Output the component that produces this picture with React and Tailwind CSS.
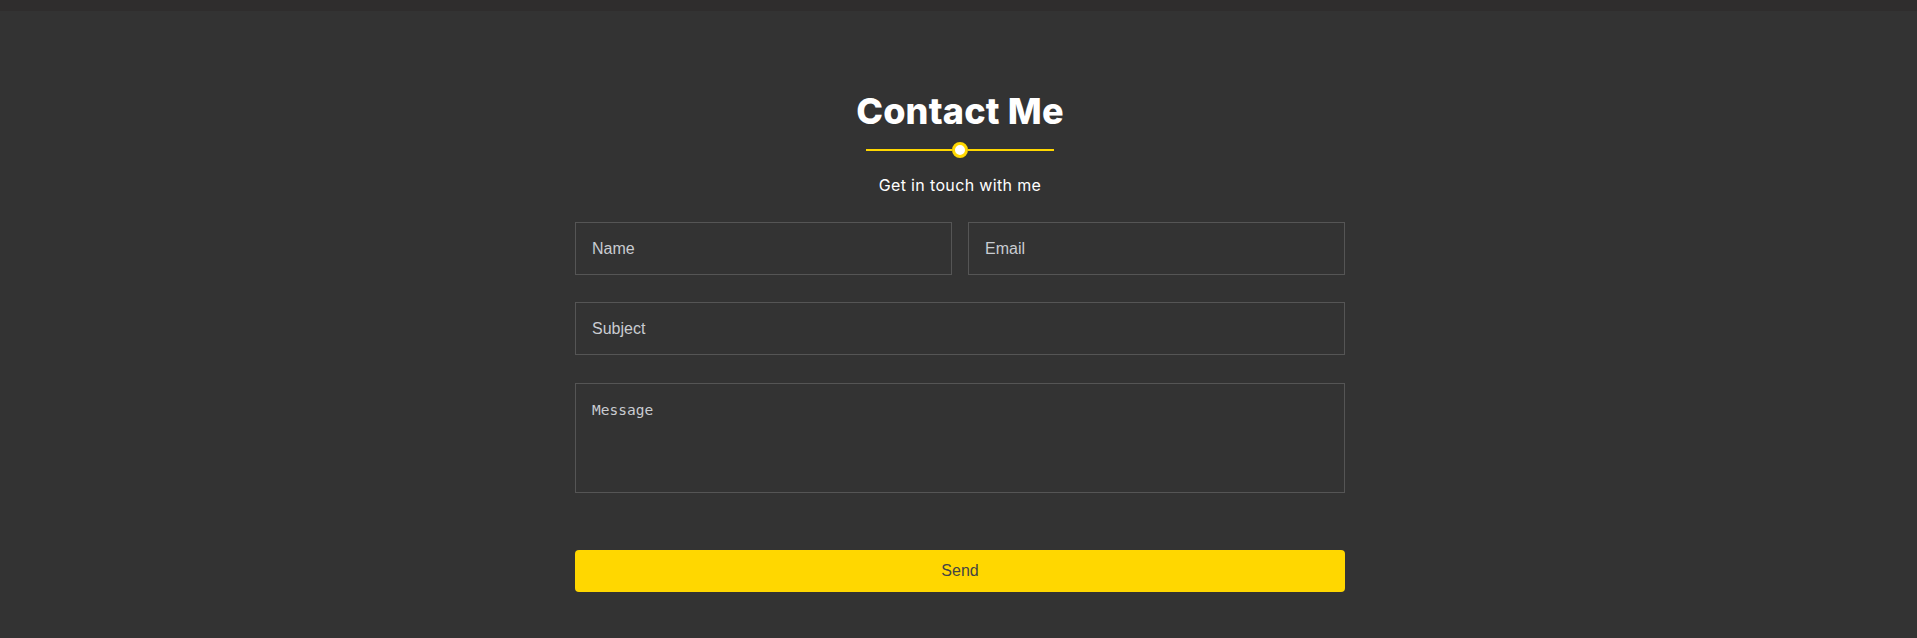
import { useState } from 'react';

const ContactSection = () => {
  const [form, setForm] = useState({ name: '', email: '', subject: '', message: '' });

  const handleChange = (e) => {
    setForm(prev => ({ ...prev, [e.target.name]: e.target.value }));
  };

  const inputClass =
    "h-[53px] w-full border border-[#555555] bg-transparent px-4 text-[16px] text-white placeholder:text-[#c9ccd1] outline-none font-['Liberation_Sans',Arial,sans-serif]";

  return (
    <div className="min-h-screen bg-[#333333]">
      {/* header edge */}
      <div className="h-[11px] bg-[#2f2d2d]" />

      <section className="flex flex-col items-center pl-[3px]">
        <h2 className="mt-[82px] h-[36px] text-[36px] font-extrabold leading-none tracking-[0.2px] text-white font-['Inter',sans-serif]">
          Contact Me
        </h2>

        {/* divider */}
        <div className="mt-[13px] flex h-[16px] w-[188px] items-center">
          <div className="h-[2px] flex-1 bg-[#ffd700]" />
          <div className="h-[16px] w-[16px] rounded-full border-[3px] border-[#ffd700] bg-white" />
          <div className="h-[2px] flex-1 bg-[#ffd700]" />
        </div>

        <p className="mt-[15px] h-[24px] text-[16px] leading-[24px] tracking-[0.35px] text-white font-['Inter',sans-serif]">
          Get in touch with me
        </p>

        <form className="mt-[25px] flex w-[770px] flex-col" onSubmit={(e) => e.preventDefault()}>
          <div className="flex gap-4">
            <input name="name" value={form.name} onChange={handleChange} placeholder="Name" className={inputClass} />
            <input name="email" value={form.email} onChange={handleChange} placeholder="Email" className={inputClass} />
          </div>

          <input
            name="subject"
            value={form.subject}
            onChange={handleChange}
            placeholder="Subject"
            className={`mt-[27px] ${inputClass}`}
          />

          <textarea
            name="message"
            value={form.message}
            onChange={handleChange}
            placeholder="Message"
            className="mt-[28px] h-[110px] w-full resize-none border border-[#555555] bg-transparent px-4 py-4 text-[14.5px] text-white placeholder:text-[#c9ccd1] outline-none font-['DejaVu_Sans_Mono',monospace]"
          />

          <button
            type="submit"
            className="mt-[57px] h-[42px] w-full rounded-[4px] bg-[#ffd700] text-[16px] text-[#444444] font-['Liberation_Sans',Arial,sans-serif]"
          >
            Send
          </button>
        </form>
      </section>
    </div>
  );
};

export default function App() {
  return <ContactSection />;
}
